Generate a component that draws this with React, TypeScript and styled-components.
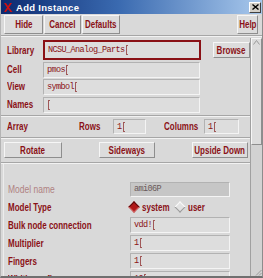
import { FC } from 'react';
import styled, { createGlobalStyle } from 'styled-components';

const RED = '#8a1116';
const BG = '#d9d9d9';
const SANS = `'Liberation Sans', Arial, sans-serif`;
const MONO = `'Liberation Mono', 'DejaVu Sans Mono', monospace`;

const GlobalStyle = createGlobalStyle`
  html, body { margin: 0; padding: 0; background: ${BG}; }
  body { width: 263px; height: 278px; overflow: hidden; }
`;

const Window = styled.div`
  width: 263px;
  height: 278px;
  box-sizing: border-box;
  display: flex;
  flex-direction: column;
  background: ${BG};
  border-left: 1px solid #b4b4b4;
  border-right: 1px solid #8c8c8c;
  border-bottom: 2px solid #707070;
  overflow: hidden;
  font-family: ${SANS};
`;

const TitleBar = styled.div`
  height: 14px;
  flex: none;
  display: flex;
  align-items: center;
  padding: 0 1px 0 2px;
  background: linear-gradient(to right, #0c2a70 0%, #3a6ab0 45%, #a8c8ec 100%);
`;

const Title = styled.span`
  margin-left: 3px;
  color: #fff;
  font: bold 9.5px ${SANS};
  letter-spacing: 0.3px;
  flex: 1;
`;

const CloseBox = styled.div`
  width: 10px;
  height: 9px;
  background: #d4d0c8;
  border: 1px solid;
  border-color: #fff #404040 #404040 #fff;
  display: flex;
  align-items: center;
  justify-content: center;
`;

const Toolbar = styled.div`
  height: 21px;
  flex: none;
  display: flex;
  align-items: center;
  padding: 0 4px 0 3px;
  gap: 1px;
`;

const Spacer = styled.div`
  flex: 1;
`;

const Button = styled.button<{ $w: number; $h?: number }>`
  width: ${(p) => p.$w}px;
  height: ${(p) => p.$h ?? 19}px;
  flex: none;
  padding: 0;
  margin: 0;
  background: #dcdcdc;
  border: 1px solid;
  border-color: #f6f6f6 #8e8e8e #8e8e8e #f6f6f6;
  display: flex;
  align-items: center;
  justify-content: center;
  overflow: visible;
`;

/* the Tk font is a narrow helvetica: squeeze Liberation Sans to its width */
const Caption = styled.span`
  display: inline-block;
  color: ${RED};
  font: bold 10px ${SANS};
  white-space: nowrap;
  transform: scaleX(0.8);
`;

const Separator = styled.div<{ $mt?: number }>`
  flex: none;
  height: 0;
  margin-top: ${(p) => p.$mt ?? 0}px;
  border-top: 1px solid #a6a6a6;
  border-bottom: 1px solid #f2f2f2;
`;

const Body = styled.div`
  flex: 1;
  min-height: 0;
  display: flex;
`;

const Form = styled.div`
  flex: 1;
  display: flex;
  flex-direction: column;
  overflow: hidden;
`;

const Row = styled.div<{ $h: number; $pt?: number }>`
  flex: none;
  box-sizing: border-box;
  height: ${(p) => p.$h}px;
  padding-top: ${(p) => p.$pt ?? 0}px;
  display: flex;
  align-items: center;
  padding-left: 6px;
`;

const Label = styled.span<{ $w: number; $muted?: boolean }>`
  width: ${(p) => p.$w}px;
  flex: none;
  color: ${(p) => (p.$muted ? '#b08282' : RED)};
  font: ${(p) => (p.$muted ? 'normal' : 'bold')} 10px ${SANS};
  white-space: nowrap;
  transform: scaleX(${(p) => (p.$muted ? 0.85 : 0.8)});
  transform-origin: left center;
`;

const Field = styled.div<{ $w: number; $h?: number; $focus?: boolean; $disabled?: boolean }>`
  width: ${(p) => p.$w}px;
  height: ${(p) => p.$h ?? 16}px;
  flex: none;
  box-sizing: border-box;
  display: flex;
  align-items: center;
  padding-left: 3px;
  background: ${(p) => (p.$disabled ? '#c6c6c6' : '#dddddd')};
  border: ${(p) => (p.$focus ? `2px solid ${RED}` : '1px solid')};
  border-color: ${(p) => (p.$focus ? RED : '#b2b2b2 #f4f4f4 #f4f4f4 #b2b2b2')};
  color: ${(p) => (p.$disabled ? '#6a5a5a' : RED)};
  font: 8.5px ${MONO};
  letter-spacing: -0.6px;
  white-space: nowrap;
  overflow: hidden;
`;

const Caret = styled.span`
  display: inline-block;
  width: 2px;
  height: 10px;
  margin-left: 1px;
  box-sizing: border-box;
  border: 1px solid #a05858;
  border-right: none;
`;

const Gap = styled.div<{ $w: number }>`
  width: ${(p) => p.$w}px;
  flex: none;
`;

const ButtonRow = styled.div`
  flex: none;
  height: 22px;
  display: flex;
  align-items: center;
  justify-content: space-between;
  padding: 0 2px 0 3px;
`;

const Params = styled.div`
  flex: 1;
  padding-top: 16px;
  border-left: 1px solid #ececec;
  margin-left: 2px;
  display: flex;
  flex-direction: column;
`;

const ParamRow = styled(Row)`
  padding-left: 4px;
`;

const Radio = styled.label<{ $w: number }>`
  width: ${(p) => p.$w}px;
  flex: none;
  display: flex;
  align-items: center;
  gap: 4px;
`;

const RadioText = styled(Caption)`
  transform-origin: left center;
`;

const Diamond = styled.span<{ $on?: boolean }>`
  width: 6px;
  height: 6px;
  flex: none;
  transform: rotate(45deg);
  background: ${(p) => (p.$on ? '#b01818' : '#e2e2e2')};
  border: 1px solid;
  border-color: ${(p) => (p.$on ? '#5a0808 #d06060 #d06060 #5a0808' : '#fafafa #9a9a9a #9a9a9a #fafafa')};
`;

const ScrollBar = styled.div`
  width: 11px;
  flex: none;
  display: flex;
  flex-direction: column;
  background: #d2d2d2;
  border-left: 1px solid #a0a0a0;
  margin-top: 1px;
`;

const Thumb = styled.div`
  height: 107px;
  box-sizing: border-box;
  background: #dcdcdc;
  border: 1px solid;
  border-color: #f6f6f6 #8e8e8e #8e8e8e #f6f6f6;
  display: flex;
  justify-content: center;
  padding-top: 1px;
`;

const Track = styled.div`
  flex: 1;
  display: flex;
  align-items: flex-end;
  justify-content: flex-end;
`;

const TitleIcon: FC = () => (
  <svg width="10" height="11" viewBox="0 0 10 11">
    <path d="M1 1 L4 5.5 L1 10 L3 10 L5 7 L7.5 10 L9.5 10 L6 5.5 L9 1 L7 1 L5 4 L3 1 Z" fill="#d01010" />
  </svg>
);

const App: FC = () => {
  return (
    <>
      <GlobalStyle />
      <Window>
        <TitleBar>
          <TitleIcon />
          <Title>Add Instance</Title>
          <CloseBox>
            <svg width="7" height="6" viewBox="0 0 7 6">
              <path d="M0.5 0.5 L6.5 5.5 M6.5 0.5 L0.5 5.5" stroke="#000" strokeWidth="1.4" />
            </svg>
          </CloseBox>
        </TitleBar>

        <Toolbar>
          <Button $w={39}><Caption>Hide</Caption></Button>
          <Button $w={37}><Caption>Cancel</Caption></Button>
          <Button $w={38}><Caption>Defaults</Caption></Button>
          <Spacer />
          <Button $w={21}><Caption>Help</Caption></Button>
        </Toolbar>
        <Separator />

        <Body>
          <Form>
            <Row $h={24} $pt={2}>
              <Label $w={36}>Library</Label>
              <Field $w={158} $h={20} $focus>
                NCSU_Analog_Parts<Caret />
              </Field>
              <Gap $w={12} />
              <Button $w={37} $h={16}><Caption>Browse</Caption></Button>
            </Row>
            <Row $h={17}>
              <Label $w={36}>Cell</Label>
              <Field $w={157}>
                pmos<Caret />
              </Field>
            </Row>
            <Row $h={17}>
              <Label $w={36}>View</Label>
              <Field $w={157}>
                symbol<Caret />
              </Field>
            </Row>
            <Row $h={19}>
              <Label $w={36}>Names</Label>
              <Field $w={157}>
                <Caret />
              </Field>
            </Row>
            <Separator $mt={1} />
            <Row $h={19}>
              <Label $w={72}>Array</Label>
              <Label $w={34}>Rows</Label>
              <Field $w={33} $h={15}>
                1<Caret />
              </Field>
              <Gap $w={18} />
              <Label $w={40}>Columns</Label>
              <Field $w={35} $h={15}>
                1<Caret />
              </Field>
            </Row>
            <Separator $mt={1} />
            <ButtonRow>
              <Button $w={58} $h={16}><Caption>Rotate</Caption></Button>
              <Button $w={56} $h={16}><Caption>Sideways</Caption></Button>
              <Button $w={56} $h={16}><Caption>Upside Down</Caption></Button>
            </ButtonRow>
            <Separator $mt={1} />

            <Params>
              <ParamRow $h={18}>
                <Label $w={122} $muted>Model name</Label>
                <Field $w={100} $h={15} $disabled>ami06P</Field>
              </ParamRow>
              <ParamRow $h={18}>
                <Label $w={122}>Model Type</Label>
                <Radio $w={46}>
                  <Diamond $on />
                  <RadioText>system</RadioText>
                </Radio>
                <Radio $w={40}>
                  <Diamond />
                  <RadioText>user</RadioText>
                </Radio>
              </ParamRow>
              <ParamRow $h={18}>
                <Label $w={122}>Bulk node connection</Label>
                <Field $w={100}>
                  vdd!<Caret />
                </Field>
              </ParamRow>
              <ParamRow $h={18}>
                <Label $w={122}>Multiplier</Label>
                <Field $w={100}>
                  1<Caret />
                </Field>
              </ParamRow>
              <ParamRow $h={18}>
                <Label $w={122}>Fingers</Label>
                <Field $w={100}>
                  1<Caret />
                </Field>
              </ParamRow>
              <ParamRow $h={18}>
                <Label $w={122}>Width per finger</Label>
                <Field $w={100}>
                  10<Caret />
                </Field>
              </ParamRow>
            </Params>
          </Form>

          <ScrollBar>
            <Thumb>
              <svg width="7" height="5" viewBox="0 0 7 5">
                <path d="M0.5 4.5 L3.5 0.5 L6.5 4.5" fill="none" stroke="#9a9a9a" strokeWidth="1" />
              </svg>
            </Thumb>
            <Track>
              <svg width="7" height="7" viewBox="0 0 7 7">
                <path d="M1 6.5 L6.5 1 M4 6.5 L6.5 4" stroke="#9a9a9a" strokeWidth="1" />
              </svg>
            </Track>
          </ScrollBar>
        </Body>
      </Window>
    </>
  );
};

export default App;
